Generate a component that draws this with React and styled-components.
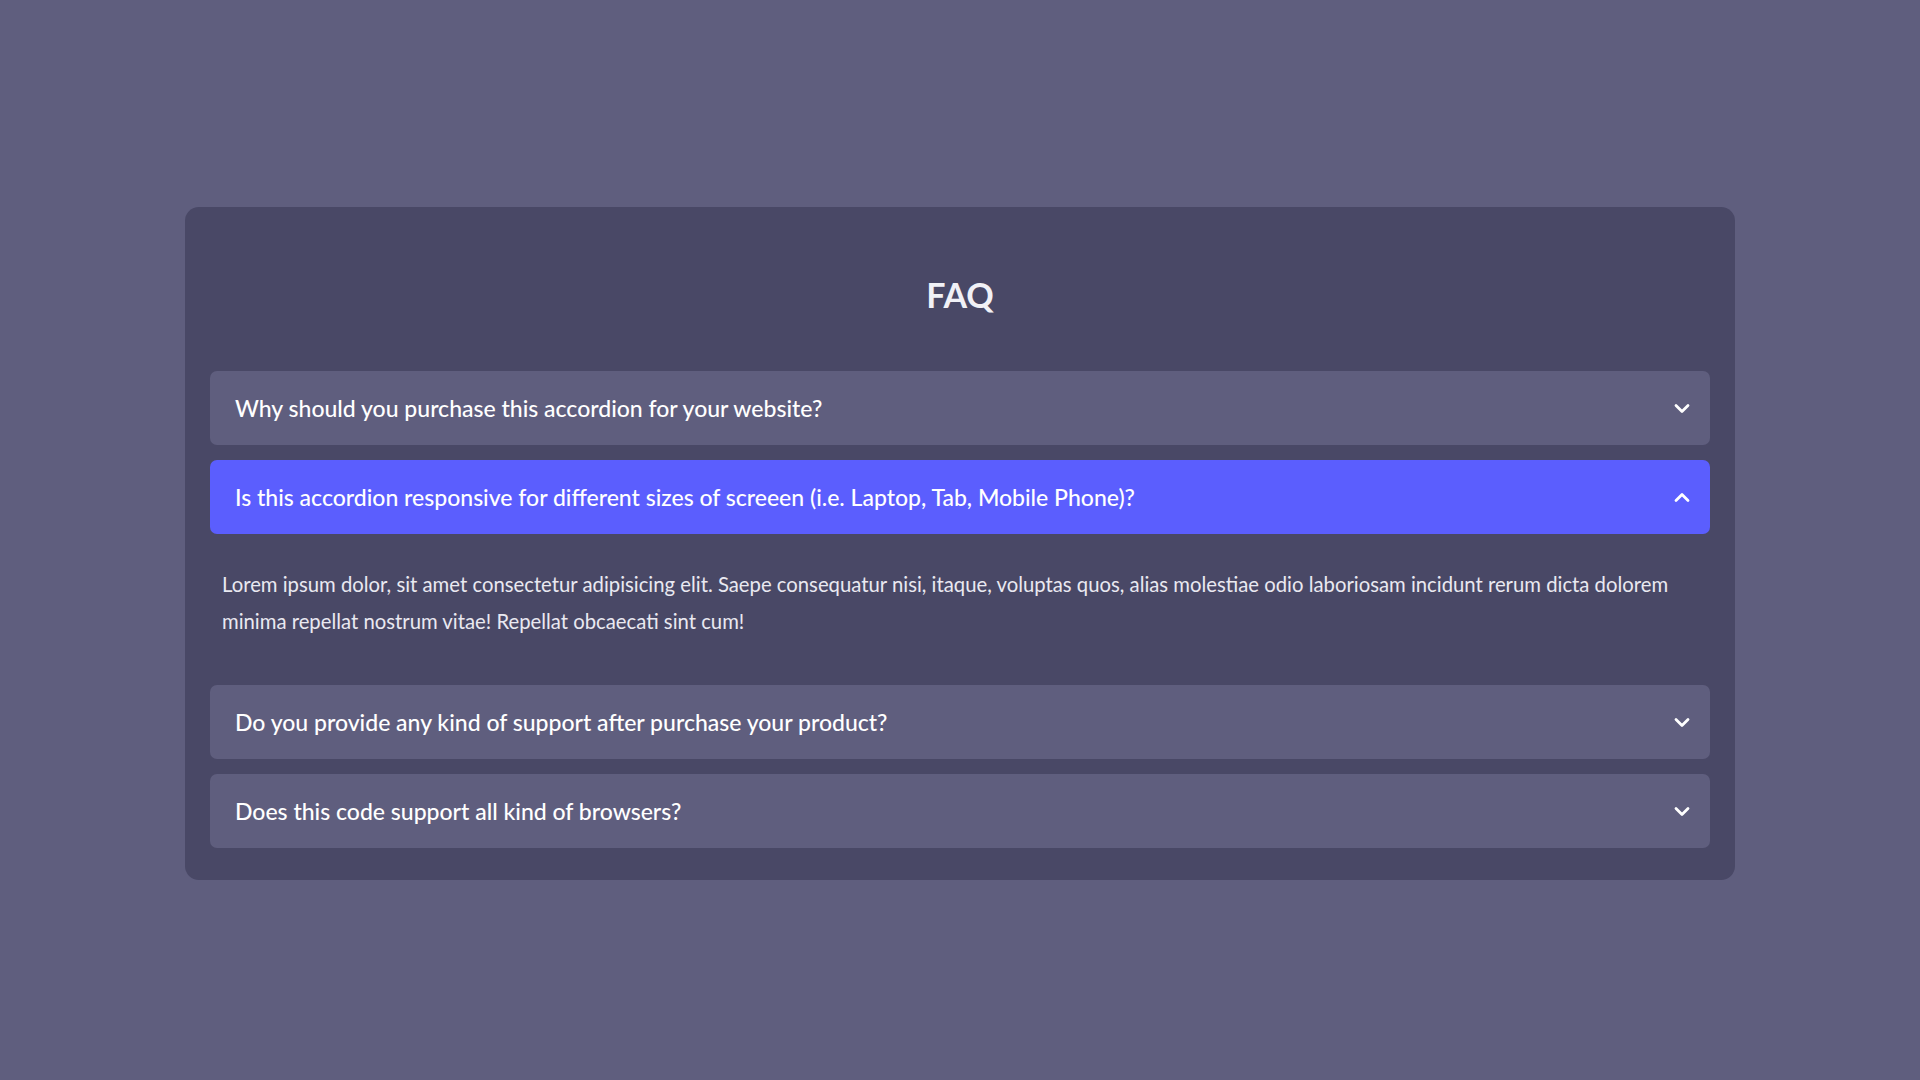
import React, { useState } from "react";
import styled, { createGlobalStyle } from "styled-components";

const GlobalStyle = createGlobalStyle`
  * { box-sizing: border-box; }
  html, body {
    margin: 0;
    padding: 0;
    background: #5f5e7e;
    font-family: Lato, "Noto Sans", sans-serif;
  }
`;

const Page = styled.div`
  min-height: 100vh;
  padding-top: 207px;
  display: flex;
  justify-content: center;
  align-items: flex-start;
`;

const Card = styled.section`
  width: 1550px;
  background: #494866;
  border-radius: 14px;
  padding: 68px 25px 32px;
  display: flex;
  flex-direction: column;
`;

const Title = styled.h1`
  margin: 0 0 55px;
  text-align: center;
  font-size: 34px;
  line-height: 1.2;
  font-weight: 700;
  color: #f1f1f6;
`;

const List = styled.div`
  display: flex;
  flex-direction: column;
  gap: 15px;
`;

const Item = styled.div`
  display: flex;
  flex-direction: column;
`;

const Question = styled.button`
  all: unset;
  box-sizing: border-box;
  width: 100%;
  height: 74px;
  display: flex;
  align-items: center;
  justify-content: space-between;
  padding: 1px 20px 0 25px;
  border-radius: 7px;
  cursor: pointer;
  background: ${(p) => (p.$open ? "#5b5efe" : "#5f5e7e")};
  color: #ffffff;
  font-family: Lato, "Noto Sans", sans-serif;
  font-size: 23px;
  font-weight: 500;
  line-height: 1.2;
`;

const Answer = styled.p`
  margin: 0;
  padding: 32px 12px 30px;
  color: #e9e9f1;
  font-size: 20.3px;
  line-height: 37px;
  font-weight: 400;
`;

const Chevron = ({ up }) => (
  <svg width="16" height="11" viewBox="0 0 16 11" aria-hidden="true">
    <path
      d={up ? "M2 8.5 L8 2.5 L14 8.5" : "M2 2.5 L8 8.5 L14 2.5"}
      fill="none"
      stroke="#ffffff"
      strokeWidth="2.8"
      strokeLinecap="round"
      strokeLinejoin="round"
    />
  </svg>
);

const faqs = [
  {
    q: "Why should you purchase this accordion for your website?",
    a: "Lorem ipsum dolor, sit amet consectetur adipisicing elit. Saepe consequatur nisi, itaque, voluptas quos, alias molestiae odio laboriosam incidunt rerum dicta dolorem minima repellat nostrum vitae! Repellat obcaecati sint cum!",
  },
  {
    q: "Is this accordion responsive for different sizes of screeen (i.e. Laptop, Tab, Mobile Phone)?",
    a: "Lorem ipsum dolor, sit amet consectetur adipisicing elit. Saepe consequatur nisi, itaque, voluptas quos, alias molestiae odio laboriosam incidunt rerum dicta dolorem minima repellat nostrum vitae! Repellat obcaecati sint cum!",
  },
  {
    q: "Do you provide any kind of support after purchase your product?",
    a: "Lorem ipsum dolor, sit amet consectetur adipisicing elit. Saepe consequatur nisi, itaque, voluptas quos, alias molestiae odio laboriosam incidunt rerum dicta dolorem minima repellat nostrum vitae! Repellat obcaecati sint cum!",
  },
  {
    q: "Does this code support all kind of browsers?",
    a: "Lorem ipsum dolor, sit amet consectetur adipisicing elit. Saepe consequatur nisi, itaque, voluptas quos, alias molestiae odio laboriosam incidunt rerum dicta dolorem minima repellat nostrum vitae! Repellat obcaecati sint cum!",
  },
];

export default function App() {
  const [open, setOpen] = useState(1);
  return (
    <>
      <GlobalStyle />
      <Page>
        <Card>
          <Title>FAQ</Title>
          <List>
            {faqs.map((f, i) => (
              <Item key={i}>
                <Question
                  $open={open === i}
                  onClick={() => setOpen(open === i ? -1 : i)}
                >
                  <span>{f.q}</span>
                  <Chevron up={open === i} />
                </Question>
                {open === i && <Answer>{f.a}</Answer>}
              </Item>
            ))}
          </List>
        </Card>
      </Page>
    </>
  );
}
